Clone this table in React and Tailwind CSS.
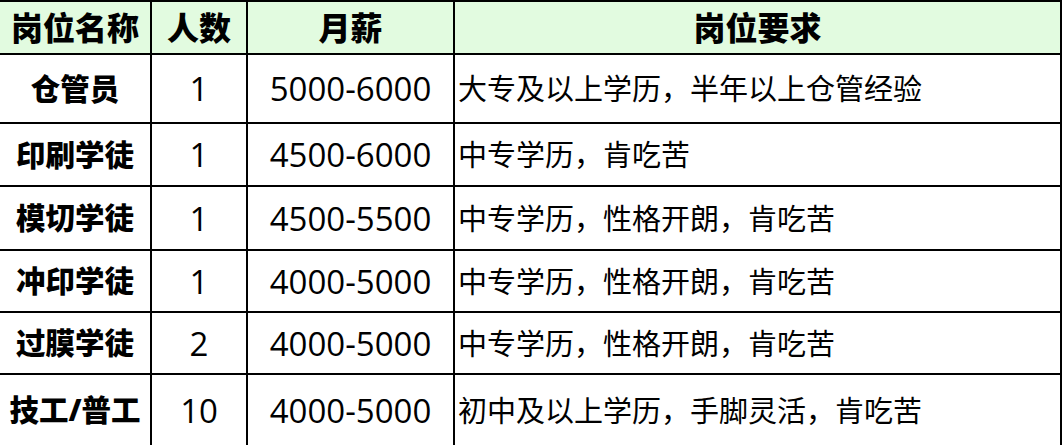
import React from "react";

const rows = [
  ["仓管员", "1", "5000-6000", "大专及以上学历，半年以上仓管经验"],
  ["印刷学徒", "1", "4500-6000", "中专学历，肯吃苦"],
  ["模切学徒", "1", "4500-5500", "中专学历，性格开朗，肯吃苦"],
  ["冲印学徒", "1", "4000-5000", "中专学历，性格开朗，肯吃苦"],
  ["过膜学徒", "2", "4000-5000", "中专学历，性格开朗，肯吃苦"],
  ["技工/普工", "10", "4000-5000", "初中及以上学历，手脚灵活，肯吃苦"],
];

const font = { fontFamily: "'Open Sans','Noto Sans CJK SC',sans-serif" };

export default function App() {
  const cell = "border-r-2 border-b-2 border-black flex items-center";
  return (
    <div
      className="w-[1062px] h-[445px] overflow-hidden bg-white text-black"
      style={font}
    >
      <div className="grid grid-cols-[152px_96px_207px_607px] grid-rows-[53px_69px_63px_64px_62px_62px_72px] border-t-2 border-black">
        {["岗位名称", "人数", "月薪", "岗位要求"].map((h) => (
          <div
            key={h}
            className={`${cell} justify-center bg-[#e2fbe0] text-[32px] font-black leading-none`}
          >
            {h}
          </div>
        ))}
        {rows.map((r) => (
          <React.Fragment key={r[0]}>
            <div className={`${cell} justify-center text-[29.5px] font-black leading-none`}>
              {r[0]}
            </div>
            <div className={`${cell} justify-center text-[33px] leading-none`}>
              {r[1]}
            </div>
            <div className={`${cell} justify-center text-[33px] leading-none`}>
              {r[2]}
            </div>
            <div className={`${cell} justify-start pl-[3px] text-[29px] leading-none`}>
              {r[3]}
            </div>
          </React.Fragment>
        ))}
      </div>
    </div>
  );
}
